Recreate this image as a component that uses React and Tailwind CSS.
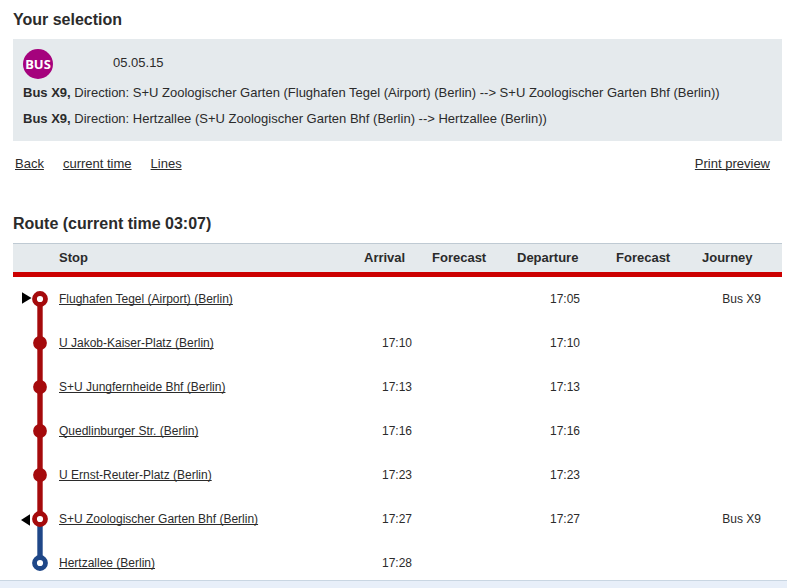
const RED = '#a50a0c';
const BLUE = '#1f4788';

const stops = [
  { name: 'Flughafen Tegel (Airport) (Berlin)', arrival: '', departure: '17:05', journey: 'Bus X9', kind: 'start' },
  { name: 'U Jakob-Kaiser-Platz (Berlin)', arrival: '17:10', departure: '17:10', journey: '', kind: 'via' },
  { name: 'S+U Jungfernheide Bhf (Berlin)', arrival: '17:13', departure: '17:13', journey: '', kind: 'via' },
  { name: 'Quedlinburger Str. (Berlin)', arrival: '17:16', departure: '17:16', journey: '', kind: 'via' },
  { name: 'U Ernst-Reuter-Platz (Berlin)', arrival: '17:23', departure: '17:23', journey: '', kind: 'via' },
  { name: 'S+U Zoologischer Garten Bhf (Berlin)', arrival: '17:27', departure: '17:27', journey: 'Bus X9', kind: 'change' },
  { name: 'Hertzallee (Berlin)', arrival: '17:28', departure: '', journey: '', kind: 'end' },
];

function Rail({ kind }) {
  const height = kind === 'end' ? 39 : 44;
  const above = kind === 'end' ? BLUE : RED;
  const below = kind === 'change' ? BLUE : RED;
  const color = kind === 'end' ? BLUE : RED;
  return (
    <svg className="block" width="46" height={height} viewBox={`0 0 46 ${height}`} aria-hidden="true">
      {kind !== 'start' && <path d="M27 0V22" stroke={above} strokeWidth="5.4" />}
      {kind !== 'end' && <path d="M27 22V44" stroke={below} strokeWidth="5.4" />}
      {kind === 'via' ? (
        <circle cx="27" cy="22" r="6.9" fill={color} />
      ) : (
        <circle cx="27" cy="22" r="5.5" fill="#fff" stroke={color} strokeWidth="4.8" />
      )}
      {kind === 'start' && <path d="M9 15.3L18.5 21L9 26.7Z" fill="#000" />}
      {kind === 'change' && <path d="M17 17.3L8 23L17 28.7Z" fill="#000" />}
    </svg>
  );
}

function Link({ children }) {
  return (
    <a href="#" className="underline [text-decoration-skip-ink:none] underline-offset-1">
      {children}
    </a>
  );
}

export default function App() {
  return (
    <div className="flex min-h-screen flex-col bg-white font-['Liberation_Sans',Arial,sans-serif] text-[13px] text-[#2b2b2b]">
      <main className="pt-2 pr-[5px] pl-[13px]">
        <h1 className="mb-[7px] text-base leading-6 font-bold">Your selection</h1>

        <section className="bg-[#e5eaed] px-[10px] pt-[10px] pb-[9px] leading-[26px]">
          <div className="flex h-[31px] items-start gap-[60px]">
            <svg width="30" height="30" viewBox="0 0 30 30" role="img" aria-label="Bus">
              <circle cx="15" cy="15" r="15" fill="#a5027d" />
              <text x="15" y="20" textAnchor="middle" fill="#fff" className="font-['Noto_Sans',sans-serif] text-[13px] font-bold">
                BUS
              </text>
            </svg>
            <span className="leading-7">05.05.15</span>
          </div>
          <p>
            <strong>Bus X9,</strong> Direction: S+U Zoologischer Garten (Flughafen Tegel (Airport) (Berlin) --&gt; S+U Zoologischer Garten Bhf (Berlin))
          </p>
          <p>
            <strong>Bus X9,</strong> Direction: Hertzallee (S+U Zoologischer Garten Bhf (Berlin) --&gt; Hertzallee (Berlin))
          </p>
        </section>

        <nav className="mt-[13px] flex gap-[19px] pr-3 pl-[2px] leading-5">
          <Link>Back</Link>
          <Link>current time</Link>
          <Link>Lines</Link>
          <span className="ml-auto">
            <Link>Print preview</Link>
          </span>
        </nav>

        <h2 className="mt-[38px] mb-[7px] text-base leading-6 font-bold">Route (current time 03:07)</h2>

        <table className="w-full table-fixed border-separate border-spacing-0 text-left">
          <colgroup>
            <col className="w-[46px]" />
            <col />
            <col className="w-[68px]" />
            <col className="w-[85px]" />
            <col className="w-[99px]" />
            <col className="w-[86px]" />
            <col className="w-[80px]" />
          </colgroup>
          <thead>
            <tr className="leading-[28px] *:border-t *:border-t-[#bfcad3] *:border-b-5 *:border-b-[#cc0000] *:bg-[#e5eaed] *:p-0">
              <td />
              <th scope="col">Stop</th>
              <th scope="col">Arrival</th>
              <th scope="col">Forecast</th>
              <th scope="col">Departure</th>
              <th scope="col">Forecast</th>
              <th scope="col">Journey</th>
            </tr>
          </thead>
          <tbody className="text-xs leading-4">
            {stops.map((s) => (
              <tr key={s.name} className="align-top">
                <td className="p-0">
                  <Rail kind={s.kind} />
                </td>
                <td className="pt-[14px]">
                  <Link>{s.name}</Link>
                </td>
                <td className="pt-[14px] pr-5 text-right">{s.arrival}</td>
                <td />
                <td className="pt-[14px] pr-9 text-right">{s.departure}</td>
                <td />
                <td className="pt-[14px] pr-[21px] text-right">{s.journey}</td>
              </tr>
            ))}
          </tbody>
        </table>
      </main>
      <footer className="min-h-2 grow border-t border-[#c9d6e2] bg-[#e8eff9]" />
    </div>
  );
}
